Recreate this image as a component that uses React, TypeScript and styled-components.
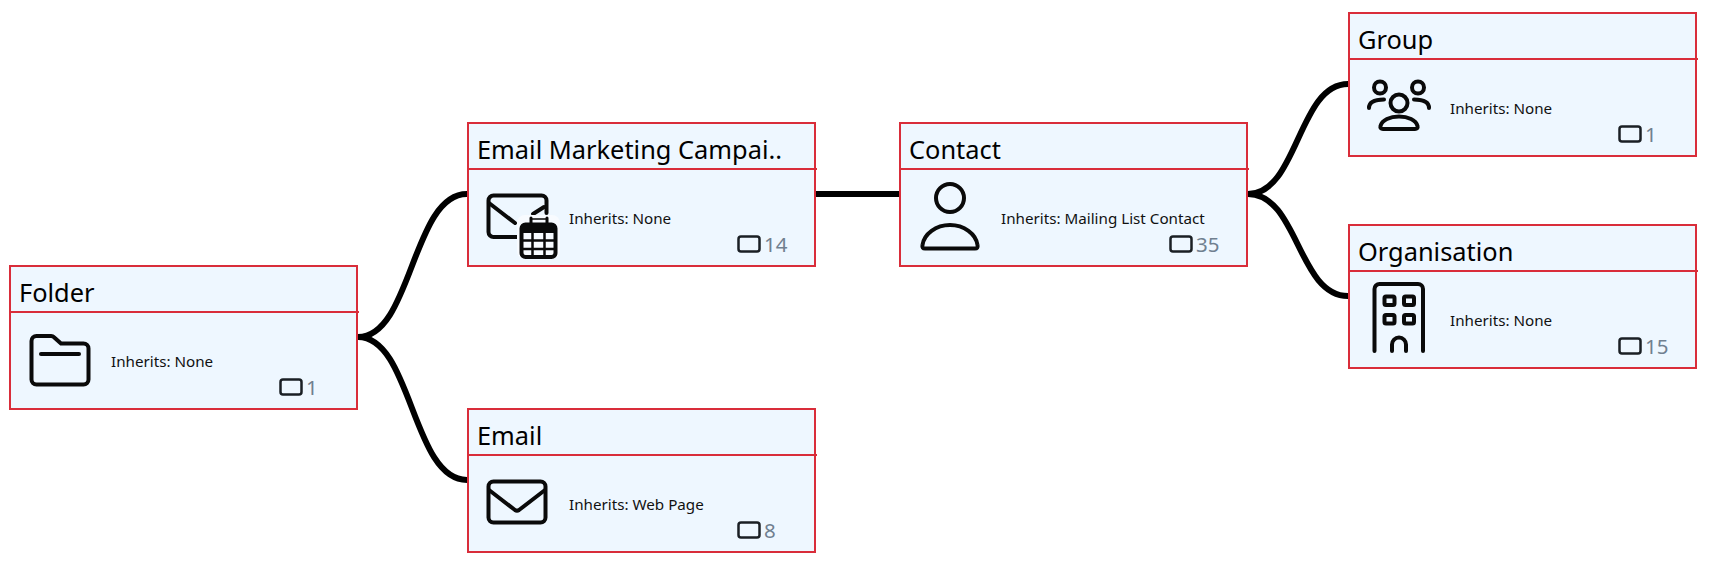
import React from 'react';
import styled, { createGlobalStyle } from 'styled-components';

const Folder = () => (
  <IconSvg viewBox="0 0 72 72">
    <path d="M7.500 18a5 5 0 0 1 5-5H27a4 4 0 0 1 3 1.200L37 20.500H59.500a5 5 0 0 1 5 5V56.500a5 5 0 0 1-5 5H12.500a5 5 0 0 1-5-5Z" />
    <path d="M17 31H55" />
  </IconSvg>
);

const Mail = () => (
  <IconSvg viewBox="0 0 72 72">
    <rect x="6.500" y="15.500" width="57" height="41" rx="5" />
    <path d="M7 24L33 44a3.500 3.500 0 0 0 4 0L63 24" />
  </IconSvg>
);

const MailCalendar = () => (
  <IconSvg viewBox="0 0 72 72">
    <path d="M38 57H11.500a5 5 0 0 1-5-5V20.500a5 5 0 0 1 5-5H59.500a5 5 0 0 1 5 5V33" />
    <path d="M7 23L33 43" />
    <path d="M62 27L51 34" />
    <rect x="35" y="35" width="43" height="44" rx="8" fill="#f8fbff" stroke="none" />
    <rect x="39.500" y="44.500" width="34" height="32.500" rx="4" />
    <path d="M40 49H73" strokeWidth="8" strokeLinecap="butt" />
    <path d="M40 60.500H73M40 69H73M50.500 50V76M62.500 50V76" strokeWidth="2.500" strokeLinecap="butt" />
    <path d="M49 38V44M65 38V44" strokeWidth="3" />
    <path d="M49 39H65" strokeWidth="1.500" />
  </IconSvg>
);

const Contact = () => (
  <IconSvg viewBox="0 0 72 72">
    <circle cx="36" cy="18" r="14" />
    <path d="M11 68.500H61C63 68.500 64 67.500 63.500 65C62 54 50 45 36 45C22 45 10 54 8.500 65C8 67.500 9 68.500 11 68.500Z" />
  </IconSvg>
);

const Group = () => (
  <IconSvg viewBox="0 0 72 72">
    <circle cx="36" cy="33" r="8.500" />
    <circle cx="17" cy="17.500" r="6" />
    <circle cx="55" cy="17.500" r="6" />
    <path d="M6 38C6 32 12 29.500 21 29.500" />
    <path d="M66 38C66 32 60 29.500 51 29.500" />
    <path d="M20 59H52C54 59 55 58 54.500 56C53 50 45 46.500 36 46.500C27 46.500 19 50 17.500 56C17 58 18 59 20 59Z" />
  </IconSvg>
);

const Building = () => (
  <IconSvg viewBox="0 0 72 72">
    <path d="M11.500 69V7a5 5 0 0 1 5-5H55a5 5 0 0 1 5 5V69" />
    <rect x="21.500" y="14.500" width="10" height="8.500" rx="1.500" />
    <rect x="41" y="14.500" width="10" height="8.500" rx="1.500" />
    <rect x="21.500" y="33" width="10" height="8.500" rx="1.500" />
    <rect x="41" y="33" width="10" height="8.500" rx="1.500" />
    <path d="M29 69V62.500a7 7 0 0 1 14 0V69" />
  </IconSvg>
);

const nodes = [
  { title: 'Folder', inherits: 'None', count: 1, x: 9, y: 265, icon: <Folder /> },
  { title: 'Email Marketing Campai..', inherits: 'None', count: 14, x: 467, y: 122, icon: <MailCalendar /> },
  { title: 'Email', inherits: 'Web Page', count: 8, x: 467, y: 408, icon: <Mail /> },
  { title: 'Contact', inherits: 'Mailing List Contact', count: 35, x: 899, y: 122, icon: <Contact /> },
  { title: 'Group', inherits: 'None', count: 1, x: 1348, y: 12, icon: <Group /> },
  { title: 'Organisation', inherits: 'None', count: 15, x: 1348, y: 224, icon: <Building /> },
];

const App = (): JSX.Element => {
  return (
    <Canvas>
      <GlobalStyle />
      <Links viewBox="0 0 1709 564">
        <path d="M358 337C412 337 412 194 467 194" />
        <path d="M358 337C412 337 412 480 467 480" />
        <path d="M815 194H899" />
        <path d="M1248 194C1298 194 1298 84 1348 84" />
        <path d="M1248 194C1298 194 1298 296 1348 296" />
      </Links>
      {nodes.map((node) => (
        <Node key={node.title} $x={node.x} $y={node.y}>
          <Title>{node.title}</Title>
          <Body>
            {node.icon}
            <Details>
              <Inherits>Inherits: {node.inherits}</Inherits>
              <Count>
                <svg width="24" height="18" viewBox="0 0 24 18">
                  <rect x="1.500" y="1.500" width="21" height="15" rx="2.500" />
                </svg>
                {node.count}
              </Count>
            </Details>
          </Body>
        </Node>
      ))}
    </Canvas>
  );
};

export default App;

const GlobalStyle = createGlobalStyle`
  body {
    margin: 0;
    background-color: #fff;
    font-family: 'Noto Sans', 'Open Sans', sans-serif;
  }
`;

const Canvas = styled.div`
  position: relative;
  width: 1709px;
  height: 564px;
  overflow: hidden;
`;

const Links = styled.svg`
  position: absolute;
  left: 0;
  top: 0;
  width: 1709px;
  height: 564px;
  fill: none;
  stroke: #000;
  stroke-width: 6;
`;

const Node = styled.div<{ $x: number; $y: number }>`
  position: absolute;
  left: ${({ $x }) => $x}px;
  top: ${({ $y }) => $y}px;
  box-sizing: border-box;
  width: 349px;
  height: 145px;
  border: 2px solid #d92d3a;
  background-color: #eef7ff;
`;

const Title = styled.div`
  box-sizing: border-box;
  height: 46px;
  margin-right: -3px;
  padding: 8px 0 0 8px;
  border-bottom: 2px solid #d92d3a;
  color: #000;
  font-size: 25.4px;
  line-height: 34px;
  white-space: nowrap;
`;

const Body = styled.div`
  display: flex;
  padding: 10px 0 0 13px;
`;

const IconSvg = styled.svg`
  flex: none;
  width: 72px;
  height: 72px;
  overflow: visible;
  fill: none;
  stroke: #0a0a0a;
  stroke-width: 4;
  stroke-linecap: round;
  stroke-linejoin: round;
`;

const Details = styled.div`
  display: flex;
  flex-direction: column;
  padding: 28px 0 0 15px;
`;

const Inherits = styled.div`
  color: #111;
  font-size: 15.2px;
  line-height: 20px;
  white-space: nowrap;
`;

const Count = styled.div`
  display: flex;
  align-items: center;
  gap: 3px;
  margin: 3px 0 0 168px;
  color: #708090;
  font-size: 20.500px;
  line-height: 26px;

  svg {
    fill: none;
    stroke: #1a1f24;
    stroke-width: 2.5;
  }
`;
